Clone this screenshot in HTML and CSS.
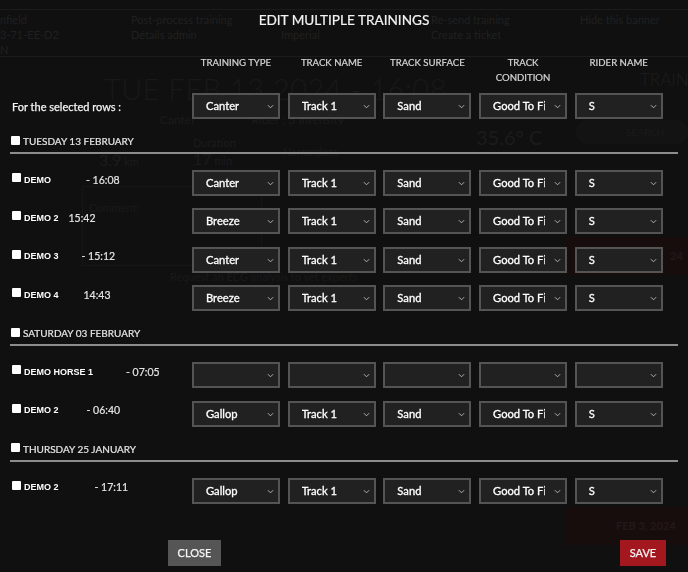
FILE: index.html
```html
<!DOCTYPE html>
<html lang="en">
<head>
<meta charset="utf-8">
<title>Edit multiple trainings</title>
<link rel="stylesheet" href="styles.css">
</head>
<body>
<div class="page">
  <div class="banner">
    <div class="bcol first"><p>nfield</p><p>3-71-EE-D2</p><p>N</p></div>
    <div class="bcol"><p>Post-process training</p><p>Détails admin</p></div>
    <div class="bcol"><p>&nbsp;</p><p>Imperial</p></div>
    <div class="bcol"><p>Re-send training</p><p>Create a ticket</p></div>
    <div class="bcol"><p>Hide this banner</p></div>
  </div>
  <div class="main">
    <div class="left">
      <div class="hero">TUE FEB 13 2024 - 16:08</div>
      <div class="subline"><span>Canter</span><span>Rider : 3 Intensity</span></div>
      <div class="stats">
        <div class="stat s1"><span class="big">3.9</span> km</div>
        <div class="stat s2"><span class="small">Duration</span><span class="big">17</span> min</div>
        <div class="stat s3">Narrandera</div>
        <div class="stat s4"><span class="big">35.6° C</span></div>
      </div>
      <div class="comment">Comment:</div>
      <div class="ecg">Request an ECG analysis to vet experts</div>
    </div>
    <div class="right">
      <div class="side-title">TRAINI</div>
      <div class="search">SEARCH</div>
      <div class="redbox first">24</div>
      <div class="redbox second">FEB 3, 2024</div>
    </div>
  </div>
</div>

<div class="overlay">
  <div class="dialog">
    <h1 class="title">EDIT MULTIPLE TRAININGS</h1>

    <div class="grid head">
      <div class="lead"></div>
      <div class="colh">TRAINING TYPE</div>
      <div class="colh">TRACK NAME</div>
      <div class="colh">TRACK SURFACE</div>
      <div class="colh">TRACK<br>CONDITION</div>
      <div class="colh">RIDER NAME</div>
    </div>

    <div class="grid bulk">
      <div class="lead bulk-label">For the selected rows :</div>
      <div class="sel"><span class="val">Canter</span><svg class="chev" viewBox="0 0 8 5"><path d="M1 1l3 3 3-3"/></svg></div>
      <div class="sel"><span class="val">Track 1</span><svg class="chev" viewBox="0 0 8 5"><path d="M1 1l3 3 3-3"/></svg></div>
      <div class="sel"><span class="val">Sand</span><svg class="chev" viewBox="0 0 8 5"><path d="M1 1l3 3 3-3"/></svg></div>
      <div class="sel"><span class="val">Good To Firm</span><svg class="chev" viewBox="0 0 8 5"><path d="M1 1l3 3 3-3"/></svg></div>
      <div class="sel"><span class="val">S</span><svg class="chev" viewBox="0 0 8 5"><path d="M1 1l3 3 3-3"/></svg></div>
    </div>

    <label class="dayhead"><input type="checkbox"><span>TUESDAY 13 FEBRUARY</span></label>

    <div class="rows">
      <div class="grid row">
        <div class="lead who"><input type="checkbox"><b>DEMO</b><span class="time m35">- 16:08</span></div>
        <div class="sel"><span class="val">Canter</span><svg class="chev" viewBox="0 0 8 5"><path d="M1 1l3 3 3-3"/></svg></div>
        <div class="sel"><span class="val">Track 1</span><svg class="chev" viewBox="0 0 8 5"><path d="M1 1l3 3 3-3"/></svg></div>
        <div class="sel"><span class="val">Sand</span><svg class="chev" viewBox="0 0 8 5"><path d="M1 1l3 3 3-3"/></svg></div>
        <div class="sel"><span class="val">Good To Firm</span><svg class="chev" viewBox="0 0 8 5"><path d="M1 1l3 3 3-3"/></svg></div>
        <div class="sel"><span class="val">S</span><svg class="chev" viewBox="0 0 8 5"><path d="M1 1l3 3 3-3"/></svg></div>
      </div>
      <div class="grid row">
        <div class="lead who"><input type="checkbox"><b>DEMO 2</b><span class="time m10">15:42</span></div>
        <div class="sel"><span class="val">Breeze</span><svg class="chev" viewBox="0 0 8 5"><path d="M1 1l3 3 3-3"/></svg></div>
        <div class="sel"><span class="val">Track 1</span><svg class="chev" viewBox="0 0 8 5"><path d="M1 1l3 3 3-3"/></svg></div>
        <div class="sel"><span class="val">Sand</span><svg class="chev" viewBox="0 0 8 5"><path d="M1 1l3 3 3-3"/></svg></div>
        <div class="sel"><span class="val">Good To Firm</span><svg class="chev" viewBox="0 0 8 5"><path d="M1 1l3 3 3-3"/></svg></div>
        <div class="sel"><span class="val">S</span><svg class="chev" viewBox="0 0 8 5"><path d="M1 1l3 3 3-3"/></svg></div>
      </div>
      <div class="grid row">
        <div class="lead who"><input type="checkbox"><b>DEMO 3</b><span class="time m22">- 15:12</span></div>
        <div class="sel"><span class="val">Canter</span><svg class="chev" viewBox="0 0 8 5"><path d="M1 1l3 3 3-3"/></svg></div>
        <div class="sel"><span class="val">Track 1</span><svg class="chev" viewBox="0 0 8 5"><path d="M1 1l3 3 3-3"/></svg></div>
        <div class="sel"><span class="val">Sand</span><svg class="chev" viewBox="0 0 8 5"><path d="M1 1l3 3 3-3"/></svg></div>
        <div class="sel"><span class="val">Good To Firm</span><svg class="chev" viewBox="0 0 8 5"><path d="M1 1l3 3 3-3"/></svg></div>
        <div class="sel"><span class="val">S</span><svg class="chev" viewBox="0 0 8 5"><path d="M1 1l3 3 3-3"/></svg></div>
      </div>
      <div class="grid row">
        <div class="lead who"><input type="checkbox"><b>DEMO 4</b><span class="time m24">14:43</span></div>
        <div class="sel"><span class="val">Breeze</span><svg class="chev" viewBox="0 0 8 5"><path d="M1 1l3 3 3-3"/></svg></div>
        <div class="sel"><span class="val">Track 1</span><svg class="chev" viewBox="0 0 8 5"><path d="M1 1l3 3 3-3"/></svg></div>
        <div class="sel"><span class="val">Sand</span><svg class="chev" viewBox="0 0 8 5"><path d="M1 1l3 3 3-3"/></svg></div>
        <div class="sel"><span class="val">Good To Firm</span><svg class="chev" viewBox="0 0 8 5"><path d="M1 1l3 3 3-3"/></svg></div>
        <div class="sel"><span class="val">S</span><svg class="chev" viewBox="0 0 8 5"><path d="M1 1l3 3 3-3"/></svg></div>
      </div>
    </div>

    <label class="dayhead"><input type="checkbox"><span>SATURDAY 03 FEBRUARY</span></label>

    <div class="rows">
      <div class="grid row">
        <div class="lead who"><input type="checkbox"><b>DEMO HORSE 1</b><span class="time m33">- 07:05</span></div>
        <div class="sel"><span class="val"></span><svg class="chev" viewBox="0 0 8 5"><path d="M1 1l3 3 3-3"/></svg></div>
        <div class="sel"><span class="val"></span><svg class="chev" viewBox="0 0 8 5"><path d="M1 1l3 3 3-3"/></svg></div>
        <div class="sel"><span class="val"></span><svg class="chev" viewBox="0 0 8 5"><path d="M1 1l3 3 3-3"/></svg></div>
        <div class="sel"><span class="val"></span><svg class="chev" viewBox="0 0 8 5"><path d="M1 1l3 3 3-3"/></svg></div>
        <div class="sel"><span class="val"></span><svg class="chev" viewBox="0 0 8 5"><path d="M1 1l3 3 3-3"/></svg></div>
      </div>
      <div class="grid row">
        <div class="lead who"><input type="checkbox"><b>DEMO 2</b><span class="time m27">- 06:40</span></div>
        <div class="sel"><span class="val">Gallop</span><svg class="chev" viewBox="0 0 8 5"><path d="M1 1l3 3 3-3"/></svg></div>
        <div class="sel"><span class="val">Track 1</span><svg class="chev" viewBox="0 0 8 5"><path d="M1 1l3 3 3-3"/></svg></div>
        <div class="sel"><span class="val">Sand</span><svg class="chev" viewBox="0 0 8 5"><path d="M1 1l3 3 3-3"/></svg></div>
        <div class="sel"><span class="val">Good To Firm</span><svg class="chev" viewBox="0 0 8 5"><path d="M1 1l3 3 3-3"/></svg></div>
        <div class="sel"><span class="val">S</span><svg class="chev" viewBox="0 0 8 5"><path d="M1 1l3 3 3-3"/></svg></div>
      </div>
    </div>

    <label class="dayhead"><input type="checkbox"><span>THURSDAY 25 JANUARY</span></label>

    <div class="rows">
      <div class="grid row">
        <div class="lead who"><input type="checkbox"><b>DEMO 2</b><span class="time m36">- 17:11</span></div>
        <div class="sel"><span class="val">Gallop</span><svg class="chev" viewBox="0 0 8 5"><path d="M1 1l3 3 3-3"/></svg></div>
        <div class="sel"><span class="val">Track 1</span><svg class="chev" viewBox="0 0 8 5"><path d="M1 1l3 3 3-3"/></svg></div>
        <div class="sel"><span class="val">Sand</span><svg class="chev" viewBox="0 0 8 5"><path d="M1 1l3 3 3-3"/></svg></div>
        <div class="sel"><span class="val">Good To Firm</span><svg class="chev" viewBox="0 0 8 5"><path d="M1 1l3 3 3-3"/></svg></div>
        <div class="sel"><span class="val">S</span><svg class="chev" viewBox="0 0 8 5"><path d="M1 1l3 3 3-3"/></svg></div>
      </div>
    </div>

    <div class="footer">
      <button class="btn close">CLOSE</button>
      <button class="btn save">SAVE</button>
    </div>
  </div>
</div>
</body>
</html>
```

FILE: styles.css
```css
* { box-sizing: border-box; }

html, body {
  margin: 0;
  padding: 0;
  background: #121212;
  font-family: Lato, "Open Sans", "Liberation Sans", sans-serif;
  overflow: hidden;
}

/* ---------- faint background page ---------- */
.page {
  width: 688px;
  height: 572px;
  overflow: hidden;
  color: #262626;
}

.banner {
  margin-top: 9px;
  height: 48px;
  border-top: 1px solid #202020;
  border-bottom: 1px solid #202020;
  display: grid;
  grid-template-columns: 131px 150px 150px 149px 1fr;
  padding-top: 2px;
  font-size: 11px;
  line-height: 15px;
}
.banner p { margin: 0; }

.main {
  display: grid;
  grid-template-columns: 566px 122px;
}

.hero {
  padding: 14px 0 0 104px;
  font-size: 29px;
  font-weight: 300;
  letter-spacing: 0.5px;
  color: #1d1d1d;
}

.subline {
  display: flex;
  gap: 56px;
  padding: 6px 0 0 160px;
  font-size: 12px;
  color: #202020;
}

.stats {
  display: flex;
  padding: 9px 0 0 99px;
  font-size: 11px;
  line-height: 13px;
  color: #202020;
}
.stat .big { font-size: 16px; line-height: 20px; }
.stat .small { display: block; }
.s1 { width: 94px; padding-top: 14px; }
.s2 { width: 90px; }
.s3 { width: 193px; padding-top: 9px; }
.s4 { margin-top: -11px; }
.s4 .big { font-size: 20px; line-height: 24px; }

.comment {
  margin: 16px 0 0 82px;
  width: 180px;
  height: 80px;
  border: 1px solid #191919;
  padding: 14px 0 0 6px;
  font-size: 11px;
  color: #1e1e1e;
}
.ecg {
  margin: 4px 0 0 170px;
  font-size: 11px;
  color: #1e1e1e;
}

.right { padding-top: 12px; }
.side-title {
  padding-left: 74px;
  font-size: 17px;
  font-weight: 300;
  color: #222;
}
.search {
  margin: 30px 0 0 10px;
  height: 24px;
  border-radius: 12px;
  background: #161616;
  font-size: 10px;
  padding: 6px 0 0 50px;
  color: #1f1f1f;
}
.redbox {
  height: 38px;
  background: #1c0e0e;
  color: #2b1d1d;
  font-size: 11px;
  font-weight: 700;
  padding: 12px 0 0 50px;
}
.redbox.first { margin-top: 93px; padding-left: 104px; }
.redbox.second { margin-top: 232px; }

/* ---------- modal ---------- */
.overlay {
  position: fixed;
  inset: 0;
  background: rgba(10, 10, 10, 0.2);
}

.dialog {
  padding: 10px 10px 0 10px;
  color: #fff;
}

.title {
  margin: 0;
  text-align: center;
  font-size: 13.6px;
  line-height: 20px;
  font-weight: 400;
  color: #f2f2f2;
  -webkit-text-stroke: 0.2px currentColor;
}

.grid {
  display: grid;
  grid-template-columns: 174.3px repeat(5, 88px);
  column-gap: 7.7px;
}

.head {
  margin-top: 25px;
  align-items: start;
}
.colh {
  text-align: center;
  font-size: 9.6px;
  line-height: 15px;
  color: #d6d6d6;
  -webkit-text-stroke: 0.2px currentColor;
}

.bulk {
  margin-top: 8px;
  align-items: center;
}
.bulk-label {
  padding-left: 2px;
  font-size: 11px;
  color: #f4f4f4;
  -webkit-text-stroke: 0.25px currentColor;
}

/* select-like field */
.sel {
  position: relative;
  height: 26px;
  background: #212121;
  border: 2px solid #545454;
  padding: 0 20px 0 12px;
  display: flex;
  align-items: center;
  overflow: hidden;
}
.val {
  display: block;
  white-space: nowrap;
  overflow: hidden;
  font-size: 11.2px;
  line-height: 22px;
  color: #fff;
  -webkit-text-stroke: 0.3px currentColor;
}
.chev {
  position: absolute;
  right: 4px;
  top: 9px;
  width: 7px;
  height: 5px;
  fill: none;
  stroke: #c4c4c4;
  stroke-width: 1;
  pointer-events: none;
}

/* checkboxes */
input[type="checkbox"] {
  -webkit-appearance: none;
  appearance: none;
  margin: 0;
  width: 9px;
  height: 9px;
  background: #fff;
  border-radius: 1px;
  flex: none;
}

/* day header */
.dayhead {
  display: flex;
  align-items: center;
  gap: 3px;
  margin-top: 14px;
  padding: 0 0 3px 1px;
  border-bottom: 2px solid #8c8c8c;
  font-size: 10px;
  line-height: 16px;
  color: #e6e6e6;
  -webkit-text-stroke: 0.2px currentColor;
}
.dayhead input { margin-top: -2px; }

.rows {
  display: flex;
  flex-direction: column;
  gap: 12.4px;
  margin-top: 16px;
}

.row { align-items: start; }

.who {
  display: flex;
  align-items: center;
  padding: 3px 0 0 2px;
  height: 16px;
}
.who input { margin-top: -4px; }
.who b {
  margin-left: 3px;
  font-family: "Liberation Sans", Arial, sans-serif;
  font-size: 9px;
  font-weight: 700;
  color: #fff;
}
.time {
  font-size: 10.5px;
  color: #e4e4e4;
  -webkit-text-stroke: 0.2px currentColor;
}
.m35 { margin-left: 35px; }
.m10 { margin-left: 10px; }
.m22 { margin-left: 23px; }
.m24 { margin-left: 25px; }
.m33 { margin-left: 33px; }
.m27 { margin-left: 28px; }
.m36 { margin-left: 36px; }

/* footer */
.footer {
  display: flex;
  justify-content: space-between;
  margin-top: 36px;
  padding: 0 12px 0 158px;
}
.btn {
  height: 26px;
  border: 0;
  border-radius: 0;
  color: #f4f4f4;
  font-family: Lato, "Open Sans", "Liberation Sans", sans-serif;
  font-size: 11px;
  padding: 0;
  -webkit-text-stroke: 0.25px currentColor;
}
.close { background: #555; width: 53px; }
.save { background: #a3181f; width: 46px; }
```
